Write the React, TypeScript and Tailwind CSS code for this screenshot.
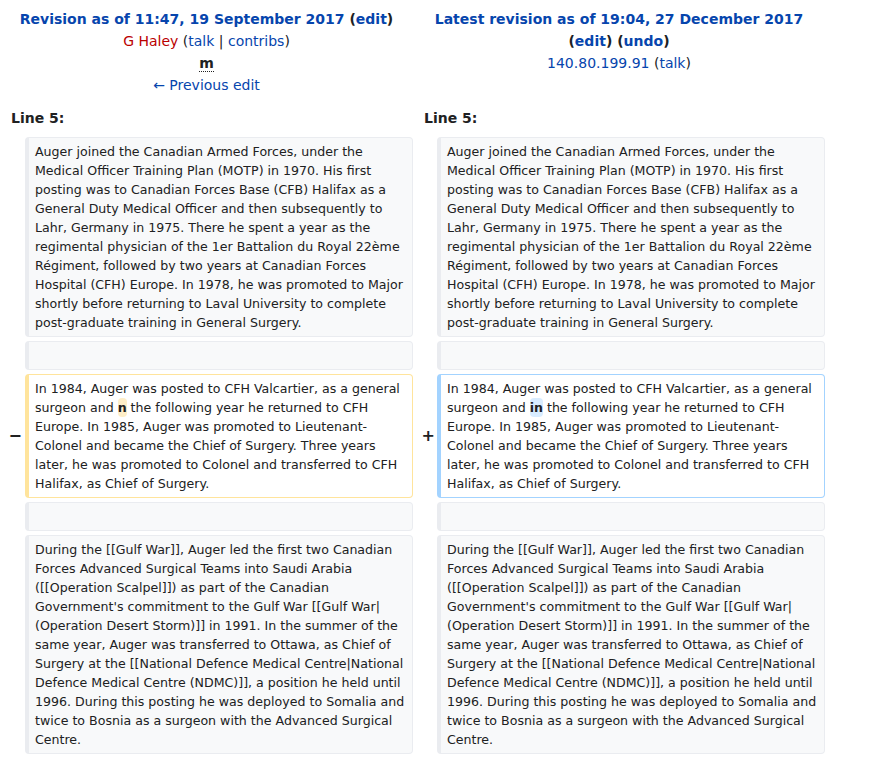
import React from "react";

const font = "font-['DejaVu_Sans',sans-serif]";

const para1 =
  "Auger joined the Canadian Armed Forces, under the Medical Officer Training Plan (MOTP) in 1970. His first posting was to Canadian Forces Base (CFB) Halifax as a General Duty Medical Officer and then subsequently to Lahr, Germany in 1975. There he spent a year as the regimental physician of the 1er Battalion du Royal 22ème Régiment, followed by two years at Canadian Forces Hospital (CFH) Europe. In 1978, he was promoted to Major shortly before returning to Laval University to complete post-graduate training in General Surgery.";

const para3 =
  "During the [[Gulf War]], Auger led the first two Canadian Forces Advanced Surgical Teams into Saudi Arabia ([[Operation Scalpel]]) as part of the Canadian Government's commitment to the Gulf War [[Gulf War|(Operation Desert Storm)]] in 1991. In the summer of the same year, Auger was transferred to Ottawa, as Chief of Surgery at the [[National Defence Medical Centre|National Defence Medical Centre (NDMC)]], a position he held until 1996. During this posting he was deployed to Somalia and twice to Bosnia as a surgeon with the Advanced Surgical Centre.";

function Changed({ word, kind }: { word: string; kind: "del" | "ins" }) {
  const bg = kind === "del" ? "bg-[#feeec8]" : "bg-[#d8ecff]";
  return (
    <>
      In 1984, Auger was posted to CFH Valcartier, as a general surgeon and{" "}
      <span className={`${bg} rounded-[4px] py-[2px] font-bold`}>{word}</span> the following year he returned to CFH
      Europe. In 1985, Auger was promoted to Lieutenant-Colonel and became the Chief of Surgery. Three years later, he
      was promoted to Colonel and transferred to CFH Halifax, as Chief of Surgery.
    </>
  );
}

function Cell({ children, tone = "context" }: { children?: React.ReactNode; tone?: "context" | "del" | "ins" }) {
  const tones = {
    context: "bg-[#f8f9fa] border-[#eaecf0]",
    del: "bg-white border-[#ffe49c]",
    ins: "bg-white border-[#a3d3ff]",
  };
  return (
    <div
      className={`${tones[tone]} border border-l-4 rounded-[4px] pl-[6px] pr-[6px] py-[4px] text-[12.6px] leading-[19px] text-[#202122] break-words`}
    >
      {children ?? "\u00a0"}
    </div>
  );
}

export default function App() {
  return (
    <div className={`${font} w-[874px] bg-white text-[#202122]`}>
      <div className="grid grid-cols-[25px_388px_24px_388px] gap-y-[4px]">
        {/* headers */}
        <div className="col-span-2 text-center text-[14px] leading-[22px] pt-[8px]">
          <div className="font-bold">
            <a className="text-[#0645ad]">Revision as of 11:47, 19 September 2017</a> (
            <a className="text-[#0645ad]">edit</a>)
          </div>
          <div>
            <a className="text-[#ba0000]">G Haley</a> (<a className="text-[#0645ad]">talk</a> |{" "}
            <a className="text-[#0645ad]">contribs</a>)
          </div>
          <div>
            <abbr className="font-bold no-underline border-b border-dotted border-[#202122]" title="This is a minor edit">
              m
            </abbr>
          </div>
          <div>
            <a className="text-[#0645ad]">← Previous edit</a>
          </div>
        </div>
        <div className="col-span-2 text-center text-[14px] leading-[22px] pt-[8px]">
          <div className="font-bold">
            <a className="text-[#0645ad]">Latest revision as of 19:04, 27 December 2017</a>
          </div>
          <div className="font-bold">
            (<a className="text-[#0645ad]">edit</a>) (<a className="text-[#0645ad]">undo</a>)
          </div>
          <div>
            <a className="text-[#0645ad]">140.80.199.91</a> (<a className="text-[#0645ad]">talk</a>)
          </div>
        </div>

        {/* line numbers */}
        <div className="col-span-2 pl-[11px] pt-[7px] pb-[4px] text-[14px] leading-[22px] font-bold">Line 5:</div>
        <div className="col-span-2 pl-[11px] pt-[7px] pb-[4px] text-[14px] leading-[22px] font-bold">Line 5:</div>

        {/* context */}
        <div />
        <Cell>{para1}</Cell>
        <div />
        <Cell>{para1}</Cell>

        <div />
        <Cell />
        <div />
        <Cell />

        {/* change */}
        <div className="flex items-center justify-end pr-[3px] text-[16px] font-bold">−</div>
        <Cell tone="del">
          <Changed word="n" kind="del" />
        </Cell>
        <div className="flex items-center justify-end pr-[2px] text-[16px] font-bold">+</div>
        <Cell tone="ins">
          <Changed word="in" kind="ins" />
        </Cell>

        <div />
        <Cell />
        <div />
        <Cell />

        <div />
        <Cell>{para3}</Cell>
        <div />
        <Cell>{para3}</Cell>
      </div>
    </div>
  );
}
